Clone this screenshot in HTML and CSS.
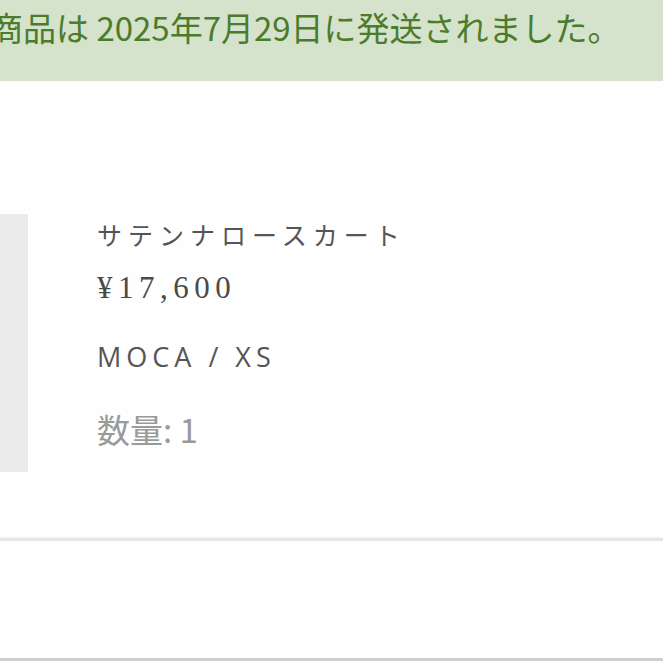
FILE: index.html
```html
<!DOCTYPE html>
<html lang="ja">
  <head>
    <meta charset="UTF-8" />
    <meta name="viewport" content="width=device-width, initial-scale=1.0" />
    <title>注文詳細</title>
    <link rel="stylesheet" href="styles.css">
  </head>
  <body>
    <div class="notice">
      <p>商品は 2025年7月29日に発送されました。</p>
    </div>
    <div class="order-item">
      <div class="thumb"></div>
      <div class="item-info">
        <div class="item-title">サテンナロースカート</div>
        <div class="item-price">¥17,600</div>
        <div class="item-variant">MOCA / XS</div>
        <div class="item-qty">数量: 1</div>
      </div>
    </div>
    <div class="order-next"></div>
  </body>
</html>
```

FILE: styles.css
```css
/* Layout */
html,
body {
  margin: 0;
  padding: 0;
  background: #fefefe;
  font-family: "Noto Sans CJK JP", "Noto Sans", sans-serif;
  overflow: hidden;
}
/* Shipping notice */
.notice {
  height: 81px;
  background: #d6e3cc;
  color: #4b7c2b;
  overflow: hidden;
}
.notice p {
  margin: 0;
  margin-left: -10px;
  padding-top: 3px;
  font-size: 33px;
  line-height: 48px;
  white-space: nowrap;
}
/* Order item */
.order-item {
  display: flex;
  gap: 69px;
  padding: 133px 0 66px;
  border-bottom: 3px solid #e6e6e6;
  box-shadow: 0 -1px 0 #f4f4f4 inset;
}
.thumb {
  width: 28px;
  height: 258px;
  background: #ebebeb;
  flex-shrink: 0;
}
.item-info {
  display: flex;
  flex-direction: column;
  color: #555;
}
.item-title {
  margin-top: 3px;
  font-size: 25px;
  line-height: 34px;
  letter-spacing: 6px;
}
.item-price {
  margin-top: 19px;
  font-family: "Liberation Serif", serif;
  font-size: 31px;
  line-height: 36px;
  letter-spacing: 5.5px;
  color: #4a4a4a;
}
.item-variant {
  margin-top: 33px;
  font-family: "Open Sans", "Noto Sans", sans-serif;
  font-size: 27px;
  line-height: 36px;
  letter-spacing: 5px;
}
.item-qty {
  margin-top: 32px;
  font-size: 33px;
  line-height: 44px;
  color: #9a9a9a;
}
/* Next block */
.order-next {
  height: 117px;
  border-bottom: 3px solid #cfcfcf;
}
```
